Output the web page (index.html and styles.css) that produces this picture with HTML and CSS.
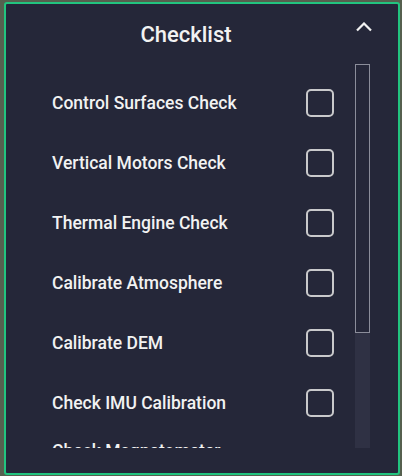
FILE: index.html
```html
<!DOCTYPE html>
<html lang="en">
<head>
<meta charset="utf-8">
<title>Checklist</title>
<link rel="stylesheet" href="styles.css">
</head>
<body>
<section class="panel">
  <header class="panel-header">
    <h1 class="panel-title">Checklist</h1>
    <button class="collapse-btn" aria-label="Collapse">
      <svg width="16" height="10" viewBox="0 0 16 10"><polyline points="1,8.5 8,1.5 15,8.5" fill="none" stroke="#f2f2f2" stroke-width="2.2"/></svg>
    </button>
  </header>
  <div class="panel-body">
    <ul class="checklist">
      <li class="check-row"><span class="check-label">Control Surfaces Check</span><span class="check-box"></span></li>
      <li class="check-row"><span class="check-label">Vertical Motors Check</span><span class="check-box"></span></li>
      <li class="check-row"><span class="check-label">Thermal Engine Check</span><span class="check-box"></span></li>
      <li class="check-row"><span class="check-label">Calibrate Atmosphere</span><span class="check-box"></span></li>
      <li class="check-row"><span class="check-label">Calibrate DEM</span><span class="check-box"></span></li>
      <li class="check-row"><span class="check-label">Check IMU Calibration</span><span class="check-box"></span></li>
      <li class="check-row check-row--last"><span class="check-label">Check Magnetometer</span><span class="check-box"></span></li>
    </ul>
    <div class="scrollbar"><div class="scroll-thumb"></div></div>
  </div>
</section>
</body>
</html>
```
FILE: styles.css
```css
* { box-sizing: border-box; }
html, body { margin: 0; padding: 0; }
body {
  width: 402px;
  height: 476px;
  background: #56604f;
  padding: 2px 2px 1px 4px;
  font-family: Roboto, "Liberation Sans", sans-serif;
  overflow: hidden;
}
.panel {
  width: 396px;
  height: 473px;
  background: #252739;
  border: 2px solid #22c47f;
  border-radius: 3px;
  display: flex;
  flex-direction: column;
}
.panel-header {
  height: 60px;
  display: flex;
  align-items: center;
  padding: 0 24px 0 0;
}
.panel-title {
  flex: 1;
  margin: 0;
  padding-left: 18px;
  text-align: center;
  font-size: 22px;
  font-weight: 500;
  color: #f2f2f2;
}
.collapse-btn {
  width: 32px;
  height: 32px;
  margin-top: -14px;
  margin-right: -6px;
  background: none;
  border: 0;
  padding: 0;
  display: flex;
  align-items: center;
  justify-content: center;
}
.panel-body {
  height: 384px;
  display: flex;
  padding-right: 28px;
}
.checklist {
  flex: 1;
  list-style: none;
  margin: 0;
  padding: 9px 21px 0 46px;
  overflow: hidden;
}
.check-row {
  height: 60px;
  display: flex;
  align-items: center;
  justify-content: space-between;
}
.check-row--last { align-items: flex-start; }
.check-row--last .check-label { padding-top: 8px; }
.check-row--last .check-box { margin-top: 16px; }
.check-label {
  font-size: 17.5px;
  font-weight: 500;
  color: #f2f2f2;
}
.check-box {
  width: 28px;
  height: 28px;
  border: 2px solid #c9c9cb;
  border-radius: 5px;
}
.scrollbar {
  width: 15px;
  height: 384px;
  background: #2f3144;
}
.scroll-thumb {
  height: 269px;
  background: #252739;
  border: 1px solid #8b8d9a;
}
```
